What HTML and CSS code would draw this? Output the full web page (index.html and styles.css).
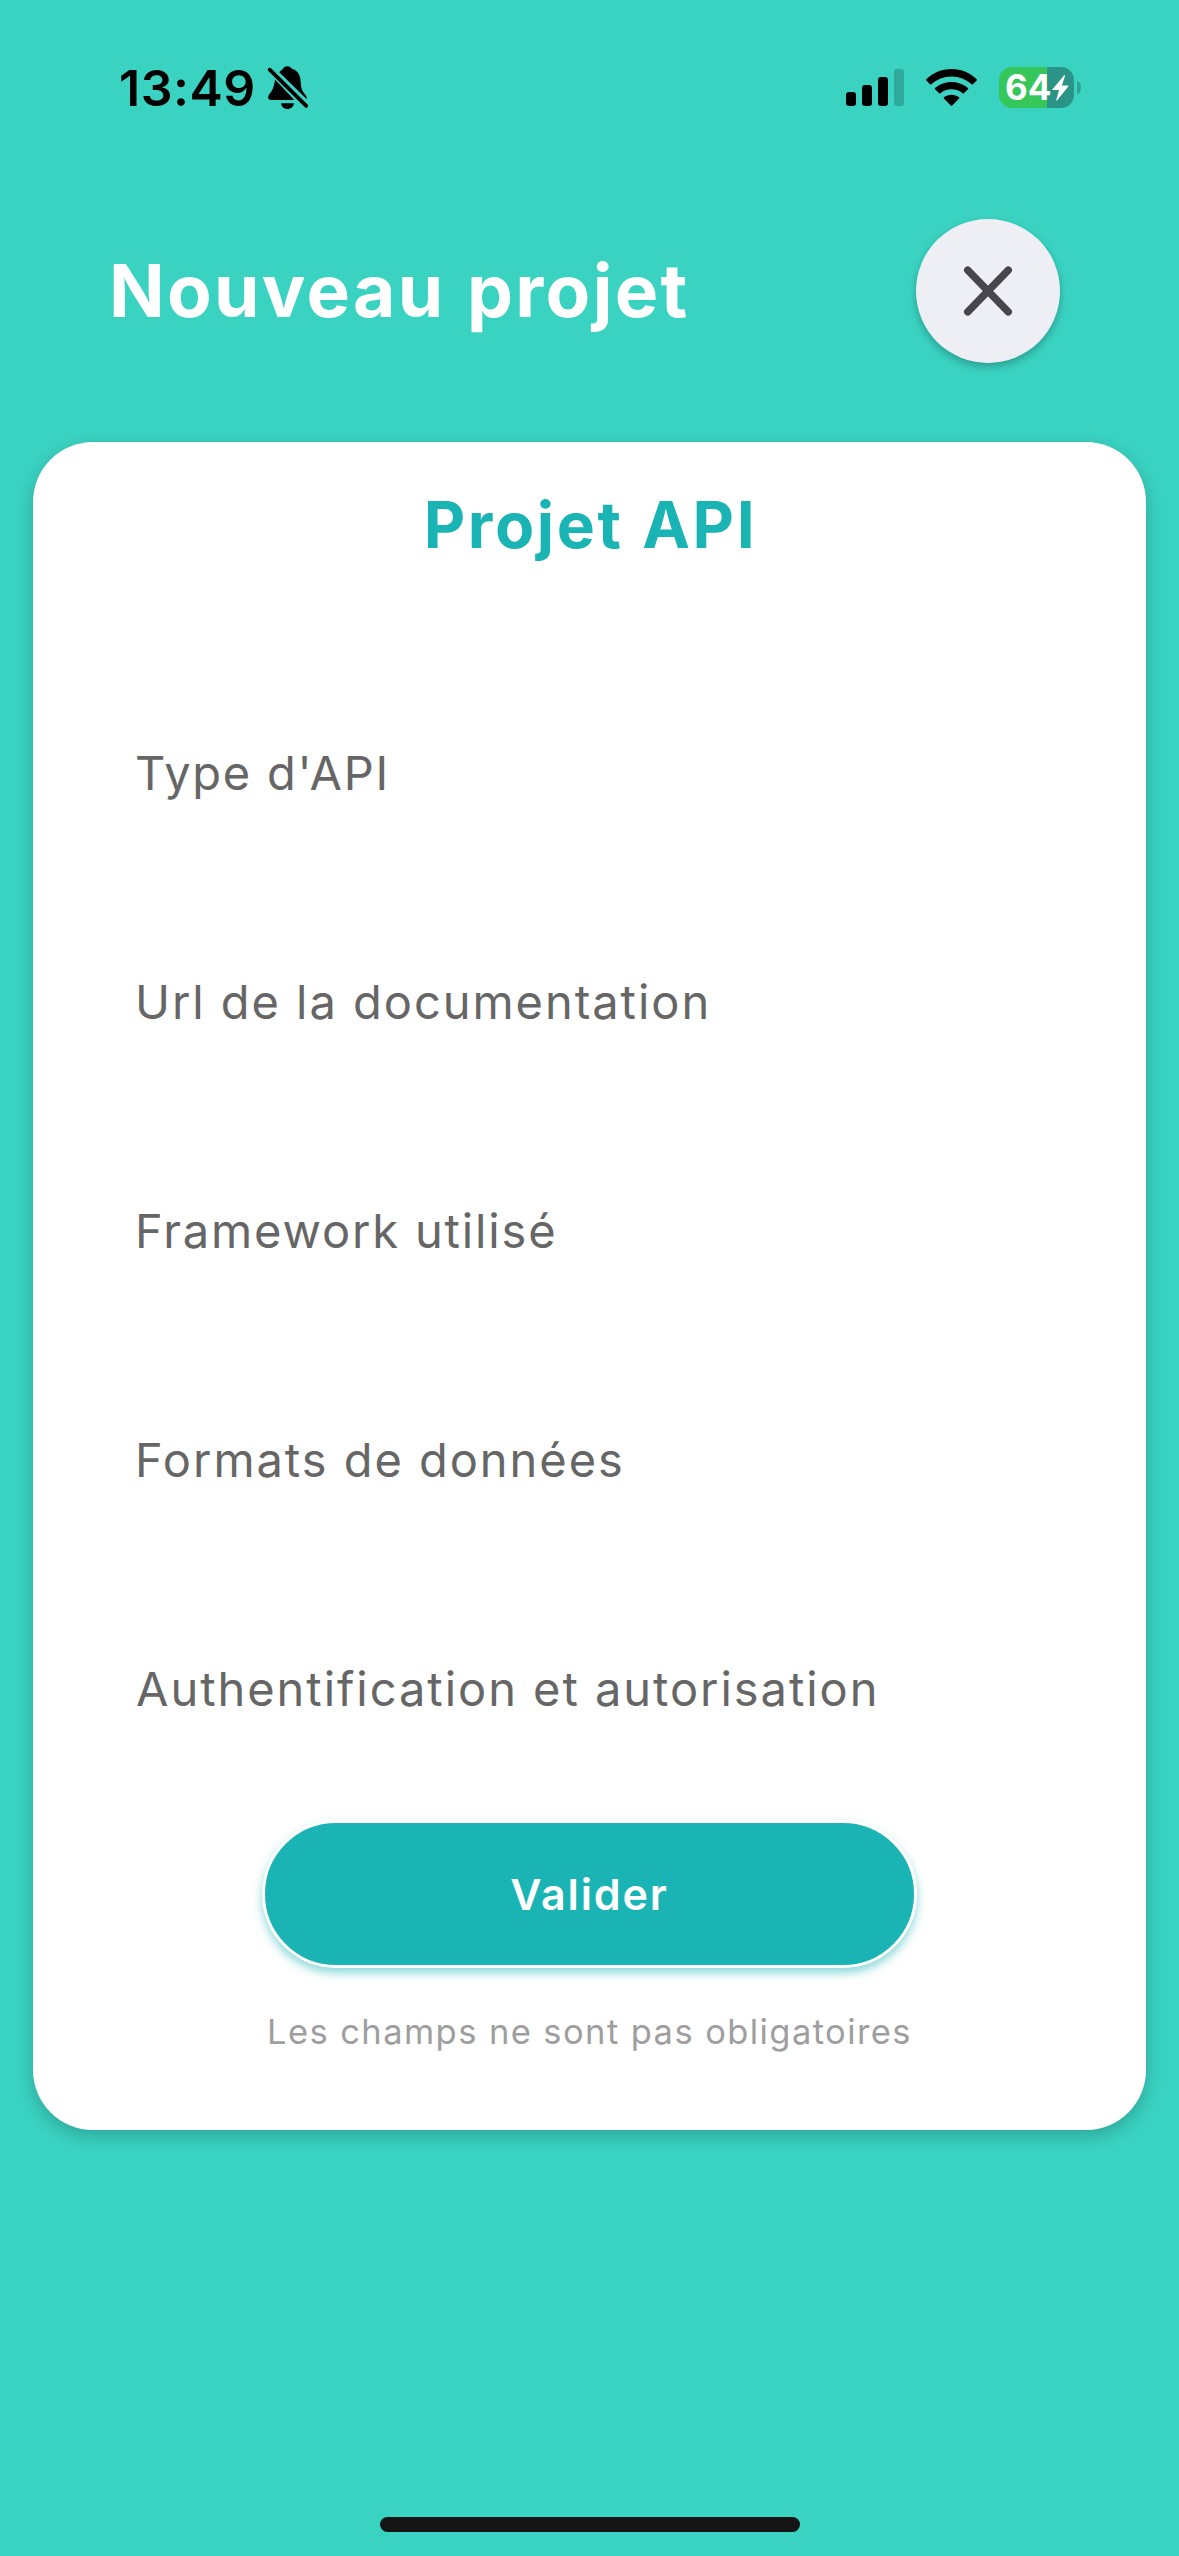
FILE: index.html
```html
<!DOCTYPE html>
<html lang="fr">
<head>
  <meta charset="utf-8">
  <title>Nouveau projet</title>
  <link rel="stylesheet" href="styles.css">
</head>
<body>
  <div class="status-bar">
    <div class="status-left">
      <span class="time">13:49</span>
      <svg class="bell" width="42" height="46" viewBox="0 0 42 46" aria-hidden="true">
        <path d="M12.3 7.2C13.8 5.6 15.2 4.9 16.2 3.6C17 2 18.4 1.2 20.3 1.2C22.2 1.2 23.6 2 24.5 3.6C30.3 5.4 33.3 9.8 33.6 16C33.8 20.5 34.4 24.6 36.2 27C38 29.3 39.8 31 39.8 33.6V34.2Z"/>
        <path d="M8 14.6L27.4 35H4.2C2.3 35 1.1 34 1.1 32.2C1.1 29.6 3.6 28 5 25.4C6.8 22 7.6 18.4 8 14.6Z"/>
        <path d="M14 38.2H27C26.6 41.6 24 44 20.5 44C17 44 14.4 41.6 14 38.2Z"/>
        <path class="bell-slash" d="M2.7 4.7L39.2 40.9"/>
      </svg>
    </div>
    <div class="status-right">
      <svg class="signal" width="58" height="37" viewBox="0 0 58 37" aria-hidden="true">
        <rect x="0" y="23" width="10" height="14" rx="3"/>
        <rect x="16" y="16" width="10" height="21" rx="3"/>
        <rect x="32" y="8" width="10" height="29" rx="3"/>
        <rect class="signal-off" x="48" y="0" width="10" height="37" rx="3"/>
      </svg>
      <svg class="wifi" width="51" height="37" viewBox="0 0 51 37" aria-hidden="true">
        <path d="M25.5 0C35.4 0 44.3 3.8 50.7 10.2Q51.2 10.8 50.7 11.4L46.9 15.2Q46.2 15.8 45.5 15.2C40.2 10.2 33.2 7.4 25.5 7.4C17.8 7.4 10.8 10.2 5.5 15.2Q4.8 15.8 4.1 15.2L.3 11.4Q-.2 10.8 .3 10.2C6.7 3.8 15.6 0 25.5 0Z"/>
        <path d="M25.5 12.9C31.9 12.9 37.7 15.2 42 19.1Q42.5 19.7 42 20.3L37.9 24.3Q37.3 24.9 36.6 24.3C33.6 21.7 29.7 20.2 25.5 20.2C21.3 20.2 17.4 21.7 14.4 24.3Q13.7 24.9 13.1 24.3L9 20.3Q8.5 19.7 9 19.1C13.3 15.2 19.1 12.9 25.5 12.9Z"/>
        <path d="M25.5 25.7C28.4 25.7 31.1 26.6 33.1 28.3Q33.6 28.9 33.1 29.5L26.2 36.4Q25.5 37 24.8 36.4L17.9 29.5Q17.4 28.9 17.9 28.3C19.9 26.6 22.6 25.7 25.5 25.7Z"/>
      </svg>
      <div class="battery">
        <div class="battery-body">
          <span class="battery-level">64</span>
          <svg class="bolt" width="17" height="26" viewBox="0 0 17 26" aria-hidden="true">
            <path d="M12 .4L.5 14.2Q0 15 .9 15H7L4.3 24.8Q4.2 26 5.2 25.3L16.3 11.5Q16.8 10.6 15.9 10.6H9.9L12.9 1.2Q13.1 -.4 12 .4Z"/>
          </svg>
        </div>
        <div class="battery-tip"></div>
      </div>
    </div>
  </div>

  <header class="header">
    <h1 class="title">Nouveau projet</h1>
    <button class="close" type="button" aria-label="Fermer">
      <svg width="50" height="52" viewBox="0 0 50 52" aria-hidden="true">
        <path d="M4.7 5.1L45.3 46.9M45.3 5.1L4.7 46.9"/>
      </svg>
    </button>
  </header>

  <main class="card">
    <h2 class="card-title">Projet API</h2>
    <div class="fields">
      <div class="field field-type">Type d'API</div>
      <div class="field">Url de la documentation</div>
      <div class="field field-framework">Framework utilisé</div>
      <div class="field">Formats de données</div>
      <div class="field field-auth">Authentification et autorisation</div>
    </div>
    <button class="submit" type="button">Valider</button>
    <p class="hint">Les champs ne sont pas obligatoires</p>
  </main>

  <div class="home-indicator"></div>
</body>
</html>
```
FILE: styles.css
```css
* {
  box-sizing: border-box;
}

body {
  margin: 0;
  width: 1179px;
  height: 2556px;
  display: flex;
  flex-direction: column;
  background: #3ad3c2;
  font-family: Inter, "Liberation Sans", sans-serif;
  overflow: hidden;
}

h1, h2, p {
  margin: 0;
}

button {
  font-family: inherit;
  padding: 0;
}

svg {
  display: block;
  flex: none;
}

/* Status bar */

.status-bar {
  height: 176px;
  padding-left: 119px;
  padding-right: 98px;
  display: flex;
  justify-content: space-between;
}

.status-left {
  height: 176px;
  display: flex;
  align-items: center;
  gap: 11px;
}

.time {
  width: 137px;
  font-size: 50px;
  font-weight: 600;
  letter-spacing: 0.5px;
  line-height: 60px;
  white-space: nowrap;
}

.bell-slash {
  fill: none;
  stroke: #000;
  stroke-width: 3.8;
  stroke-linecap: round;
}

.status-right {
  display: flex;
  align-items: center;
  height: 175px;
}

.signal-off {
  fill: #2ea99b;
}

.wifi {
  margin-left: 22px;
}

.battery {
  margin-left: 22px;
  display: flex;
  align-items: center;
  gap: 3px;
}

.battery-body {
  width: 75px;
  height: 41px;
  padding-left: 6px;
  display: flex;
  align-items: center;
  border-radius: 13px;
  background: linear-gradient(to right, #35c759 48px, #2a9488 48px);
}

.battery-level {
  width: 47px;
  font-size: 35px;
  font-weight: 700;
  line-height: 41px;
  color: #fff;
}

.bolt {
  fill: #fff;
}

.battery-tip {
  width: 4px;
  height: 13px;
  border-radius: 0 4px 4px 0 / 0 6.5px 6.5px 0;
  background: #2fa196;
}

/* Page header */

.header {
  height: 266px;
  padding: 43px 119px 0 109px;
  display: flex;
  justify-content: space-between;
  align-items: flex-start;
}

.title {
  font-size: 73px;
  font-weight: 700;
  line-height: 144px;
  letter-spacing: 2.3px;
  word-spacing: 2px;
  color: #fff;
}

.close {
  width: 144px;
  height: 144px;
  display: flex;
  align-items: center;
  justify-content: center;
  border: 0;
  border-radius: 50%;
  background: #eeeff4;
  box-shadow: 0 4px 9px rgba(0, 0, 0, 0.25);
}

.close path {
  fill: none;
  stroke: #49454f;
  stroke-width: 7.4;
  stroke-linecap: round;
}

/* Form card */

.card {
  height: 1688px;
  margin: 0 33px;
  padding-top: 43px;
  display: flex;
  flex-direction: column;
  align-items: center;
  border-radius: 60px;
  background: #fff;
  box-shadow: 0 6px 18px rgba(0, 0, 0, 0.22);
}

.card-title {
  padding-left: 2px;
  font-size: 64px;
  font-weight: 700;
  line-height: 80px;
  letter-spacing: 2.6px;
  word-spacing: 1px;
  color: #1ab4b5;
}

.fields {
  width: 100%;
  margin-top: 93px;
  padding-left: 102px;
}

.field {
  height: 229px;
  font-size: 47px;
  line-height: 229px;
  letter-spacing: 1.96px;
  color: #666;
}

.field-type {
  letter-spacing: 1.74px;
}

.field-framework {
  letter-spacing: 1.85px;
}

.field-auth {
  padding-left: 1px;
}

.submit {
  width: 655px;
  height: 148px;
  flex: none;
  margin-top: 17px;
  border: 3px solid #fff;
  border-radius: 74px;
  background: #1ab4b5;
  box-shadow: 0 5px 10px rgba(26, 180, 181, 0.5);
  font-size: 43px;
  font-weight: 600;
  letter-spacing: 1.9px;
  color: #fff;
}

.hint {
  margin-top: 39px;
  font-size: 34.5px;
  line-height: 50px;
  letter-spacing: 1.42px;
  color: #9e9e9e;
}

/* Home indicator */

.home-indicator {
  width: 420px;
  height: 15px;
  margin: auto auto 24px;
  border-radius: 8px;
  background: #151515;
}
```
